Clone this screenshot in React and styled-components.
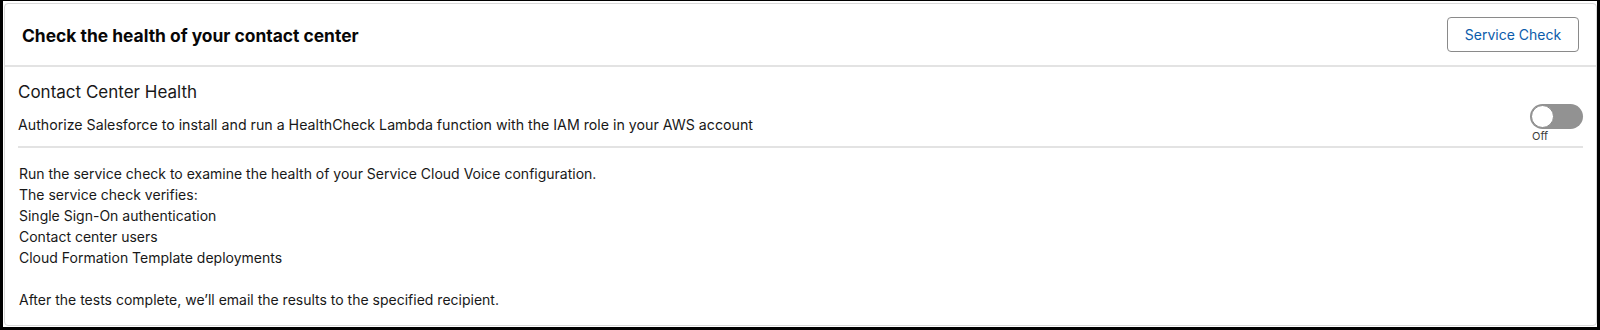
import React from 'react';
import styled, { createGlobalStyle } from 'styled-components';

const GlobalStyle = createGlobalStyle`
  html, body {
    margin: 0;
    padding: 0;
    background: #fff;
  }
  body {
    font-family: Inter, "Liberation Sans", Arial, sans-serif;
    color: #181818;
  }
`;

const Frame = styled.div`
  width: 1600px;
  height: 330px;
  box-sizing: border-box;
  border: 3px solid #000;
  border-top-width: 1px;
  padding: 2px 0 0 1px;
  background: #fff;
`;

const Card = styled.div`
  box-sizing: border-box;
  height: 323px;
  border: 1px solid #d9d9d9;
  border-radius: 4px;
  display: flex;
  flex-direction: column;
`;

const Header = styled.div`
  height: 63px;
  flex-shrink: 0;
  box-sizing: border-box;
  padding: 1px 17px 0 17px;
  display: flex;
  align-items: center;
  justify-content: space-between;
  border-bottom: 2px solid #e3e3e3;
`;

const Title = styled.h2`
  margin: 0;
  font-size: 17.4px;
  font-weight: 700;
  color: #080707;
`;

const OutlineButton = styled.button`
  font-family: inherit;
  width: 132px;
  height: 35px;
  margin-top: -1px;
  background: #fff;
  border: 1px solid #8a8a8a;
  border-radius: 4px;
  color: #0b5cab;
  font-size: 14px;
  cursor: pointer;
`;

const Body = styled.div`
  padding: 0 13px 0 13px;
`;

const SettingRow = styled.div`
  display: flex;
  justify-content: space-between;
  align-items: flex-start;
  padding: 14px 0 3px;
  border-bottom: 2px solid #e3e3e3;
`;

const SettingText = styled.div`
  display: flex;
  flex-direction: column;
  gap: 12px;
`;

const SettingTitle = styled.div`
  font-size: 17px;
  line-height: 22px;
`;

const SettingDesc = styled.div`
  font-size: 14.2px;
  line-height: 20px;
`;

const ToggleWrap = styled.div`
  display: flex;
  flex-direction: column;
  align-items: flex-start;
  margin-top: 23px;
`;

const Track = styled.div`
  width: 53px;
  height: 25px;
  box-sizing: border-box;
  border-radius: 13px;
  background: ${p => (p.on ? '#0176d3' : '#929292')};
  display: flex;
  align-items: center;
  justify-content: ${p => (p.on ? 'flex-end' : 'flex-start')};
  padding: 0 1px;
`;

const Knob = styled.div`
  width: 23px;
  height: 23px;
  box-sizing: border-box;
  border-radius: 50%;
  background: #fff;
  border: 1px solid #8a8a8a;
`;

const ToggleLabel = styled.span`
  font-size: 11px;
  line-height: 14px;
  color: #3e3e3c;
  margin-left: 2px;
`;

const Info = styled.div`
  padding: 15px 0 0 1px;
  font-size: 14px;
  line-height: 21px;
`;

const Line = styled.div`
  min-height: 21px;
`;

const lines = [
  'Run the service check to examine the health of your Service Cloud Voice configuration.',
  'The service check verifies:',
  'Single Sign-On authentication',
  'Contact center users',
  'Cloud Formation Template deployments',
  '',
  'After the tests complete, we\u2019ll email the results to the specified recipient.',
];

const Toggle = ({ on }) => (
  <ToggleWrap>
    <Track on={on ? 1 : 0}>
      <Knob />
    </Track>
    <ToggleLabel>{on ? 'On' : 'Off'}</ToggleLabel>
  </ToggleWrap>
);

const App = () => (
  <>
    <GlobalStyle />
    <Frame>
      <Card>
        <Header>
          <Title>Check the health of your contact center</Title>
          <OutlineButton>Service Check</OutlineButton>
        </Header>
        <Body>
          <SettingRow>
            <SettingText>
              <SettingTitle>Contact Center Health</SettingTitle>
              <SettingDesc>
                Authorize Salesforce to install and run a HealthCheck Lambda function with the IAM role in your AWS account
              </SettingDesc>
            </SettingText>
            <Toggle on={false} />
          </SettingRow>
          <Info>
            {lines.map((l, i) => (
              <Line key={i}>{l}</Line>
            ))}
          </Info>
        </Body>
      </Card>
    </Frame>
  </>
);

export default App;
